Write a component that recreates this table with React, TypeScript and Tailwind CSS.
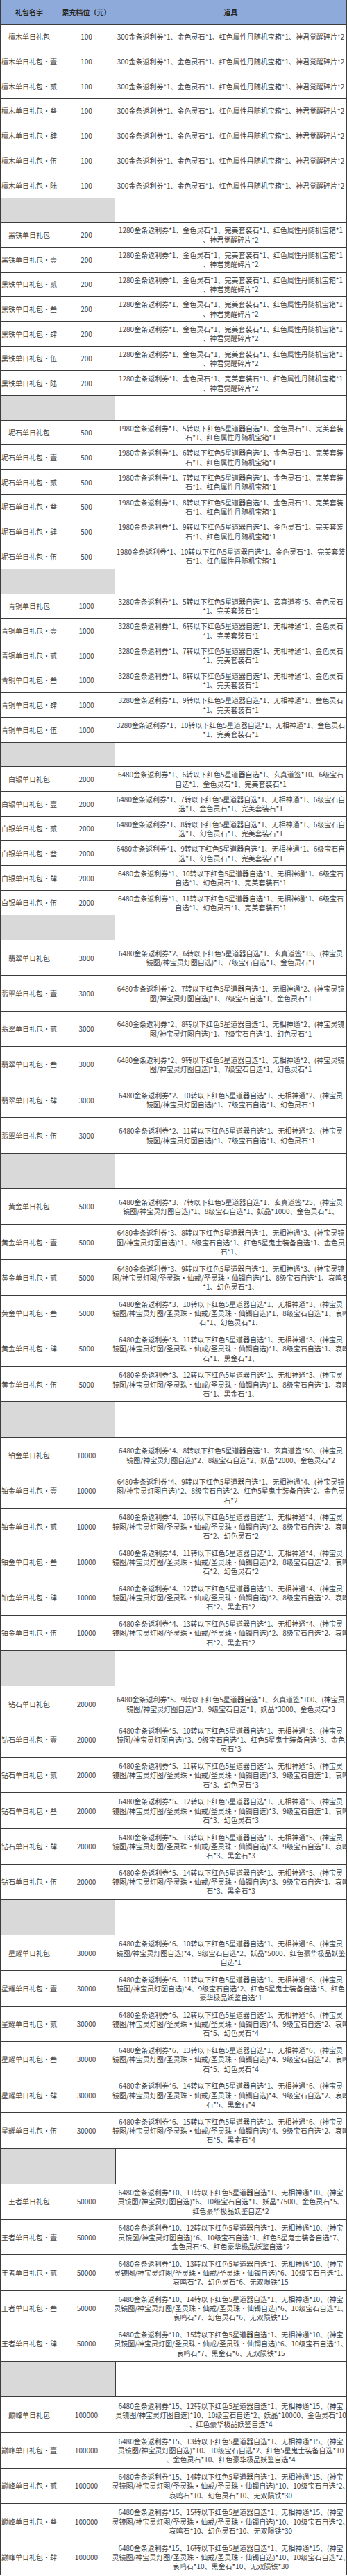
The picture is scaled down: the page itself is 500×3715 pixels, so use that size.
import type { ReactNode } from "react";

type Row = { name: string; lines: string[] };
type Section = {
  amount: string;
  rows: Row[];
  tall?: boolean;
  faint?: boolean; // light divider between name and amount columns
  mergedGap?: boolean; // grey gap row after this section has no divider
  gap?: boolean;
};

const SUFFIX = ["", "·壹", "·贰", "·叁", "·肆", "·伍", "·陆"];

const mk = (prefix: string, lines: string[][]): Row[] =>
  lines.map((l, i) => ({ name: `${prefix}单日礼包${SUFFIX[i]}`, lines: l }));

const tanmu = "300金条返利券*1、金色灵石*1、红色属性丹随机宝箱*1、神君觉醒碎片*2";
const heitie = ["1280金条返利券*1、金色灵石*1、完美套装石*1、红色属性丹随机宝箱*1", "、神君觉醒碎片*2"];

const nishi = (t: number) => [
  `1980金条返利券*1、${t}转以下红色5星道器自选*1、金色灵石*1、完美套装`,
  "石*1、红色属性丹随机宝箱*1",
];

const qingtong = (t: number, mid: string) => [
  `3280金条返利券*1、${t}转以下红色5星道器自选*1、${mid}、金色灵石`,
  "*1、完美套装石*1",
];

const SECTIONS: Section[] = [
  { amount: "100", rows: mk("檀木", Array.from({ length: 7 }, () => [tanmu])), gap: true },
  { amount: "200", rows: mk("黑铁", Array.from({ length: 7 }, () => heitie)), gap: true },
  { amount: "500", rows: mk("坭石", [5, 6, 7, 8, 9, 10].map(nishi)), gap: true },
  {
    amount: "1000",
    rows: mk("青铜", [
      qingtong(5, "玄真道签*5"),
      qingtong(6, "无相神通*1"),
      qingtong(7, "无相神通*1"),
      qingtong(8, "无相神通*1"),
      qingtong(9, "无相神通*1"),
      qingtong(10, "无相神通*1"),
    ]),
    gap: true,
  },
  {
    amount: "2000",
    rows: mk("白银", [
      ["6480金条返利券*1、6转以下红色5星道器自选*1、玄真道签*10、6级宝石", "自选*1、金色灵石*1、完美套装石*1"],
      ["6480金条返利券*1、7转以下红色5星道器自选*1、无相神通*1、6级宝石自", "选*1、金色灵石*1、完美套装石*1"],
      ["6480金条返利券*1、8转以下红色5星道器自选*1、无相神通*1、6级宝石自", "选*1、幻色灵石*1、完美套装石*1"],
      ["6480金条返利券*1、9转以下红色5星道器自选*1、无相神通*1、6级宝石自", "选*1、幻色灵石*1、完美套装石*1"],
      ["6480金条返利券*1、10转以下红色5星道器自选*1、无相神通*1、6级宝石", "自选*1、幻色灵石*1、完美套装石*1"],
      ["6480金条返利券*1、11转以下红色5星道器自选*1、无相神通*1、6级宝石", "自选*1、幻色灵石*1、完美套装石*1"],
    ]),
    gap: true,
  },
  {
    amount: "3000",
    tall: true,
    faint: true,
    rows: mk("翡翠", [
      ["6480金条返利券*2、6转以下红色5星道器自选*1、玄真道签*15、(神宝灵", "镜图/神宝灵灯图自选)*1、7级宝石自选*1、金色灵石*1"],
      ["6480金条返利券*2、7转以下红色5星道器自选*1、无相神通*2、(神宝灵镜", "图/神宝灵灯图自选)*1、7级宝石自选*1、金色灵石*1"],
      ["6480金条返利券*2、8转以下红色5星道器自选*1、无相神通*2、(神宝灵镜", "图/神宝灵灯图自选)*1、7级宝石自选*1、幻色灵石*1"],
      ["6480金条返利券*2、9转以下红色5星道器自选*1、无相神通*2、(神宝灵镜", "图/神宝灵灯图自选)*1、7级宝石自选*1、幻色灵石*1"],
      ["6480金条返利券*2、10转以下红色5星道器自选*1、无相神通*2、(神宝灵", "镜图/神宝灵灯图自选)*1、7级宝石自选*1、幻色灵石*1"],
      ["6480金条返利券*2、11转以下红色5星道器自选*1、无相神通*2、(神宝灵", "镜图/神宝灵灯图自选)*1、7级宝石自选*1、幻色灵石*1"],
    ]),
    gap: true,
  },
  {
    amount: "5000",
    tall: true,
    rows: mk("黄金", [
      ["6480金条返利券*3、7转以下红色5星道器自选*1、玄真道签*25、(神宝灵", "镜图/神宝灵灯图自选)*1、8级宝石自选*1、妖晶*1000、金色灵石*1、"],
      ["6480金条返利券*3、8转以下红色5星道器自选*1、无相神通*3、(神宝灵镜", "图/神宝灵灯图自选)*1、8级宝石自选*1、红色5星鬼士装备自选*1、金色灵", "石*1、"],
      ["6480金条返利券*3、9转以下红色5星道器自选*1、无相神通*3、(神宝灵镜", "图/神宝灵灯图/圣灵珠·仙戒/圣灵珠·仙镯自选)*1、8级宝石自选*1、哀鸣石", "*1、幻色灵石*1、"],
      ["6480金条返利券*3、10转以下红色5星道器自选*1、无相神通*3、(神宝灵", "镜图/神宝灵灯图/圣灵珠·仙戒/圣灵珠·仙镯自选)*1、8级宝石自选*1、哀鸣", "石*1、幻色灵石*1、"],
      ["6480金条返利券*3、11转以下红色5星道器自选*1、无相神通*3、(神宝灵", "镜图/神宝灵灯图/圣灵珠·仙戒/圣灵珠·仙镯自选)*1、8级宝石自选*1、哀鸣", "石*1、黑金石*1、"],
      ["6480金条返利券*3、12转以下红色5星道器自选*1、无相神通*3、(神宝灵", "镜图/神宝灵灯图/圣灵珠·仙戒/圣灵珠·仙镯自选)*1、8级宝石自选*1、哀鸣", "石*1、黑金石*1、"],
    ]),
    gap: true,
  },
  {
    amount: "10000",
    tall: true,
    rows: mk("铂金", [
      ["6480金条返利券*4、8转以下红色5星道器自选*1、玄真道签*50、(神宝灵", "镜图/神宝灵灯图自选)*2、8级宝石自选*2、妖晶*2000、金色灵石*2"],
      ["6480金条返利券*4、9转以下红色5星道器自选*1、无相神通*4、(神宝灵镜", "图/神宝灵灯图自选)*2、8级宝石自选*2、红色5星鬼士装备自选*2、金色灵", "石*2"],
      ["6480金条返利券*4、10转以下红色5星道器自选*1、无相神通*4、(神宝灵", "镜图/神宝灵灯图/圣灵珠·仙戒/圣灵珠·仙镯自选)*2、8级宝石自选*2、哀鸣", "石*2、幻色灵石*2"],
      ["6480金条返利券*4、11转以下红色5星道器自选*1、无相神通*4、(神宝灵", "镜图/神宝灵灯图/圣灵珠·仙戒/圣灵珠·仙镯自选)*2、8级宝石自选*2、哀鸣", "石*2、幻色灵石*2"],
      ["6480金条返利券*4、12转以下红色5星道器自选*1、无相神通*4、(神宝灵", "镜图/神宝灵灯图/圣灵珠·仙戒/圣灵珠·仙镯自选)*2、8级宝石自选*2、哀鸣", "石*2、黑金石*2"],
      ["6480金条返利券*4、13转以下红色5星道器自选*1、无相神通*4、(神宝灵", "镜图/神宝灵灯图/圣灵珠·仙戒/圣灵珠·仙镯自选)*2、8级宝石自选*2、哀鸣", "石*2、黑金石*2"],
    ]),
    gap: true,
  },
  {
    amount: "20000",
    tall: true,
    rows: mk("钻石", [
      ["6480金条返利券*5、9转以下红色5星道器自选*1、玄真道签*100、(神宝灵", "镜图/神宝灵灯图自选)*3、9级宝石自选*1、妖晶*3000、金色灵石*3"],
      ["6480金条返利券*5、10转以下红色5星道器自选*1、无相神通*5、(神宝灵", "镜图/神宝灵灯图自选)*3、9级宝石自选*1、红色5星鬼士装备自选*3、金色", "灵石*3"],
      ["6480金条返利券*5、11转以下红色5星道器自选*1、无相神通*5、(神宝灵", "镜图/神宝灵灯图/圣灵珠·仙戒/圣灵珠·仙镯自选)*3、9级宝石自选*1、哀鸣", "石*3、幻色灵石*3"],
      ["6480金条返利券*5、12转以下红色5星道器自选*1、无相神通*5、(神宝灵", "镜图/神宝灵灯图/圣灵珠·仙戒/圣灵珠·仙镯自选)*3、9级宝石自选*1、哀鸣", "石*3、幻色灵石*3"],
      ["6480金条返利券*5、13转以下红色5星道器自选*1、无相神通*5、(神宝灵", "镜图/神宝灵灯图/圣灵珠·仙戒/圣灵珠·仙镯自选)*3、9级宝石自选*1、哀鸣", "石*3、黑金石*3"],
      ["6480金条返利券*5、14转以下红色5星道器自选*1、无相神通*5、(神宝灵", "镜图/神宝灵灯图/圣灵珠·仙戒/圣灵珠·仙镯自选)*3、9级宝石自选*1、哀鸣", "石*3、黑金石*3"],
    ]),
    gap: true,
  },
  {
    amount: "30000",
    tall: true,
    faint: true,
    mergedGap: true,
    rows: mk("星耀", [
      ["6480金条返利券*6、10转以下红色5星道器自选*1、无相神通*6、(神宝灵", "镜图/神宝灵灯图自选)*4、9级宝石自选*2、妖晶*5000、红色豪华极品妖鉴", "自选*1"],
      ["6480金条返利券*6、11转以下红色5星道器自选*1、无相神通*6、(神宝灵", "镜图/神宝灵灯图自选)*4、9级宝石自选*2、红色5星鬼士装备自选*5、红色", "豪华极品妖鉴自选*1"],
      ["6480金条返利券*6、12转以下红色5星道器自选*1、无相神通*6、(神宝灵", "镜图/神宝灵灯图/圣灵珠·仙戒/圣灵珠·仙镯自选)*4、9级宝石自选*2、哀鸣", "石*5、幻色灵石*4"],
      ["6480金条返利券*6、13转以下红色5星道器自选*1、无相神通*6、(神宝灵", "镜图/神宝灵灯图/圣灵珠·仙戒/圣灵珠·仙镯自选)*4、9级宝石自选*2、哀鸣", "石*5、幻色灵石*4"],
      ["6480金条返利券*6、14转以下红色5星道器自选*1、无相神通*6、(神宝灵", "镜图/神宝灵灯图/圣灵珠·仙戒/圣灵珠·仙镯自选)*4、9级宝石自选*2、哀鸣", "石*5、黑金石*4"],
      ["6480金条返利券*6、15转以下红色5星道器自选*1、无相神通*6、(神宝灵", "镜图/神宝灵灯图/圣灵珠·仙戒/圣灵珠·仙镯自选)*4、9级宝石自选*2、哀鸣", "石*5、黑金石*4"],
    ]),
    gap: true,
  },
  {
    amount: "50000",
    tall: true,
    faint: true,
    mergedGap: true,
    rows: mk("王者", [
      ["6480金条返利券*10、11转以下红色5星道器自选*1、无相神通*10、(神宝", "灵镜图/神宝灵灯图自选)*6、10级宝石自选*1、妖晶*7500、金色灵石*5、", "红色豪华极品妖鉴自选*2"],
      ["6480金条返利券*10、12转以下红色5星道器自选*1、无相神通*10、(神宝", "灵镜图/神宝灵灯图自选)*6、10级宝石自选*1、红色5星鬼士装备自选*7、", "金色灵石*5、红色豪华极品妖鉴自选*2"],
      ["6480金条返利券*10、13转以下红色5星道器自选*1、无相神通*10、(神宝", "灵镜图/神宝灵灯图/圣灵珠·仙戒/圣灵珠·仙镯自选)*6、10级宝石自选*1、", "哀鸣石*7、幻色灵石*6、无双陨铁*15"],
      ["6480金条返利券*10、14转以下红色5星道器自选*1、无相神通*10、(神宝", "灵镜图/神宝灵灯图/圣灵珠·仙戒/圣灵珠·仙镯自选)*6、10级宝石自选*1、", "哀鸣石*7、幻色灵石*6、无双陨铁*15"],
      ["6480金条返利券*10、15转以下红色5星道器自选*1、无相神通*10、(神宝", "灵镜图/神宝灵灯图/圣灵珠·仙戒/圣灵珠·仙镯自选)*6、10级宝石自选*1、", "哀鸣石*7、黑金石*6、无双陨铁*15"],
    ]),
    gap: true,
  },
  {
    amount: "100000",
    tall: true,
    faint: true,
    rows: mk("巅峰", [
      ["6480金条返利券*15、12转以下红色5星道器自选*1、无相神通*15、(神宝", "灵镜图/神宝灵灯图自选)*10、10级宝石自选*2、妖晶*10000、金色灵石*10", "、红色豪华极品妖鉴自选*4"],
      ["6480金条返利券*15、13转以下红色5星道器自选*1、无相神通*15、(神宝", "灵镜图/神宝灵灯图自选)*10、10级宝石自选*2、红色5星鬼士装备自选*10", "、金色灵石*10、红色豪华极品妖鉴自选*4"],
      ["6480金条返利券*15、14转以下红色5星道器自选*1、无相神通*15、(神宝", "灵镜图/神宝灵灯图/圣灵珠·仙戒/圣灵珠·仙镯自选)*10、10级宝石自选*2、", "哀鸣石*10、幻色灵石*10、无双陨铁*30"],
      ["6480金条返利券*15、15转以下红色5星道器自选*1、无相神通*15、(神宝", "灵镜图/神宝灵灯图/圣灵珠·仙戒/圣灵珠·仙镯自选)*10、10级宝石自选*2、", "哀鸣石*10、幻色灵石*10、无双陨铁*30"],
      ["6480金条返利券*15、16转以下红色5星道器自选*1、无相神通*15、(神宝", "灵镜图/神宝灵灯图/圣灵珠·仙戒/圣灵珠·仙镯自选)*10、10级宝石自选*2、", "哀鸣石*10、黑金石*10、无双陨铁*30"],
    ]),
  },
];

function TableRow({
  tall,
  children,
  className = "",
}: {
  tall?: boolean;
  children: ReactNode;
  className?: string;
}) {
  return (
    <div
      className={`flex border-b border-[#3c3c3c] ${tall ? "h-[51.26px]" : "h-[35.7px]"} ${className}`}
    >
      {children}
    </div>
  );
}

export default function App() {
  return (
    <div
      className="w-[500px] bg-white text-[10px] leading-[13.3px] text-[#3f3f3f]"
      style={{ fontFamily: '"Noto Sans CJK SC", "Noto Sans", sans-serif' }}
    >
      <div className="border-x border-[#3c3c3c]">
        {/* header */}
        <TableRow className="bg-[#8eaadb] font-bold text-[#262626]">
          <div className="flex w-[83px] shrink-0 items-center justify-center border-r border-[#3c3c3c]">
            礼包名字
          </div>
          <div className="flex w-[82px] shrink-0 items-center justify-center border-r border-[#3c3c3c]">
            累充档位（元）
          </div>
          <div className="flex flex-1 items-center justify-center">道具</div>
        </TableRow>

        {SECTIONS.map((s) => (
          <div key={s.amount}>
            {s.rows.map((r) => (
              <TableRow key={r.name} tall={s.tall}>
                <div
                  className={`flex w-[83px] shrink-0 items-center justify-center whitespace-nowrap border-r ${
                    s.faint ? "border-[#e4e4e4]" : "border-[#3c3c3c]"
                  }`}
                >
                  {r.name}
                </div>
                <div className="flex w-[82px] shrink-0 items-center justify-center border-r border-[#3c3c3c]">
                  {s.amount}
                </div>
                <div className="flex min-w-0 flex-1 flex-col items-center justify-center overflow-visible">
                  {r.lines.map((l, i) => (
                    <div key={i} className="whitespace-nowrap">
                      {l}
                    </div>
                  ))}
                </div>
              </TableRow>
            ))}
            {s.gap && (
              <TableRow tall={s.tall}>
                <div
                  className={`w-[83px] shrink-0 bg-[#d9d9d9] ${
                    s.mergedGap ? "" : "border-r border-[#3c3c3c]"
                  }`}
                />
                <div
                  className={`shrink-0 border-r border-[#3c3c3c] bg-[#d9d9d9] ${
                    s.mergedGap ? "w-[83px]" : "w-[82px]"
                  }`}
                />
                <div className="flex-1" />
              </TableRow>
            )}
          </div>
        ))}
      </div>
    </div>
  );
}
